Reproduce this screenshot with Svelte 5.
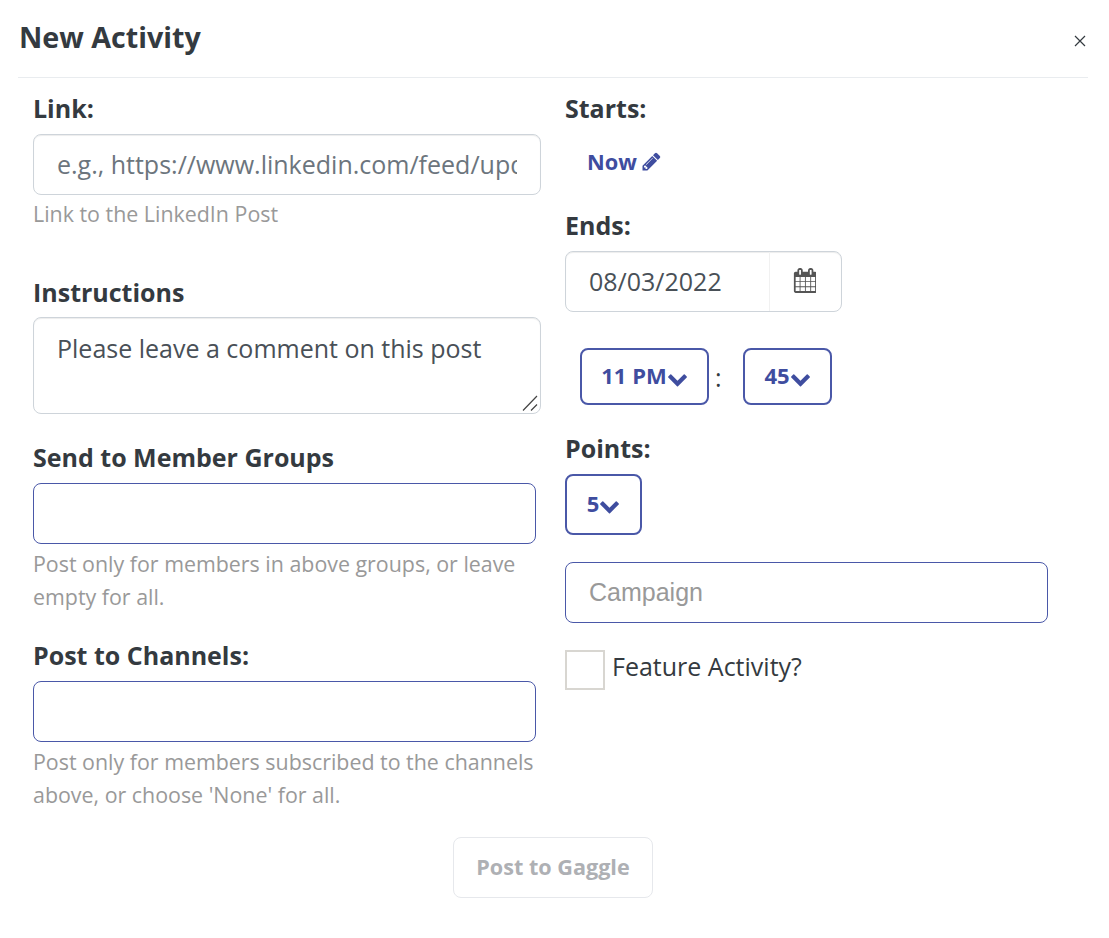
<script lang="ts">
  const pencil = 'M491 1536l91-91-235-235-91 91v107h128v128h107zm523-928q0-22-22-22-10 0-17 7l-542 542q-7 7-7 17 0 22 22 22 10 0 17-7l542-542q7-7 7-17zm-54-192l416 416-832 832h-416v-416zm683 96q0 53-37 90l-166 166-416-416 166-165q36-38 90-38 53 0 91 38l235 234q37 39 37 91z';
  const chevron = 'M1683 808l-742 741q-19 19-45 19t-45-19l-742-741q-19-19-19-45.5t19-45.5l166-165q19-19 45-19t45 19l531 531 531-531q19-19 45-19t45 19l166 165q19 19 19 45.5t-19 45.5z';
  const calendar = 'M192 1664h288v-288h-288v288zm352 0h320v-288h-320v288zm-352-352h288v-320h-288v320zm352 0h320v-320h-320v320zm-352-384h288v-288h-288v288zm736 736h320v-288h-320v288zm-384-736h320v-288h-320v288zm768 736h288v-288h-288v288zm-384-352h320v-320h-320v320zm-352-864v-288q0-13-9.5-22.5t-22.5-9.5h-64q-13 0-22.5 9.5t-9.5 22.5v288q0 13 9.5 22.5t22.5 9.5h64q13 0 22.5-9.5t9.5-22.5zm736 864h288v-320h-288v320zm-384-384h320v-288h-320v288zm384 0h288v-288h-288v288zm32-480v-288q0-13-9.5-22.5t-22.5-9.5h-64q-13 0-22.5 9.5t-9.5 22.5v288q0 13 9.5 22.5t22.5 9.5h64q13 0 22.5-9.5t9.5-22.5zm384-64v1280q0 52-38 90t-90 38h-1408q-52 0-90-38t-38-90v-1280q0-52 38-90t90-38h128v-96q0-66 47-113t113-47h64q66 0 113 47t47 113v96h384v-96q0-66 47-113t113-47h64q66 0 113 47t47 113v96h128q52 0 90 38t38 90z';
</script>

<div class="modal">
  <header class="modal-header">
    <h2>New Activity</h2>
    <button class="close" aria-label="Close">
      <svg viewBox="0 0 12 12" width="12" height="12"><path d="M1 1l10 10M11 1L1 11" stroke="#343a40" stroke-width="1.2" fill="none" /></svg>
    </button>
  </header>

  <div class="columns">
    <div class="col-left">
      <label class="field-label" for="link">Link:</label>
      <input id="link" class="text-input" placeholder="e.g., https://www.linkedin.com/feed/update/urn:li:activity" />
      <p class="help first">Link to the LinkedIn Post</p>

      <label class="field-label instructions" for="instructions">Instructions</label>
      <div class="area-wrap">
        <textarea id="instructions" class="text-input area">Please leave a comment on this post</textarea>
        <svg class="grip" viewBox="0 0 16 16" width="16" height="16"><path d="M1 15.5L15 1M9 15.5l6-6" stroke="#444" stroke-width="1.2" fill="none" /></svg>
      </div>

      <label class="field-label groups" for="groups">Send to Member Groups</label>
      <input id="groups" class="text-input picker" />
      <p class="help">Post only for members in above groups, or leave empty for all.</p>

      <label class="field-label channels" for="channels">Post to Channels:</label>
      <input id="channels" class="text-input picker" />
      <p class="help">Post only for members subscribed to the channels above, or choose 'None' for all.</p>
    </div>

    <div class="col-right">
      <div class="field-label">Starts:</div>
      <div class="now">
        Now
        <svg viewBox="0 0 1792 1792" width="21" height="21"><path d={pencil} /></svg>
      </div>

      <label class="field-label ends" for="ends">Ends:</label>
      <div class="date-group">
        <input id="ends" class="date-input" value="08/03/2022" />
        <span class="date-addon">
          <svg viewBox="0 0 1664 1792" width="23" height="25"><path d={calendar} /></svg>
        </span>
      </div>

      <div class="time-row">
        <button class="dropdown hour">11 PM<svg viewBox="0 0 1792 1792" width="21" height="21"><path d={chevron} /></svg></button>
        <span class="colon">:</span>
        <button class="dropdown minute">45<svg viewBox="0 0 1792 1792" width="21" height="21"><path d={chevron} /></svg></button>
      </div>

      <div class="field-label points">Points:</div>
      <button class="dropdown points-btn">5<svg viewBox="0 0 1792 1792" width="21" height="21"><path d={chevron} /></svg></button>

      <input class="campaign" placeholder="Campaign" />

      <label class="feature">
        <span class="box"></span>
        <span>Feature Activity?</span>
      </label>
    </div>
  </div>

  <div class="footer">
    <button class="submit" disabled>Post to Gaggle</button>
  </div>
</div>

<style>
  :global(body) {
    background: #fff;
  }

  .modal {
    width: 1109px;
    height: 938px;
    box-sizing: border-box;
    padding: 0 21px 0 18px;
    font-family: 'Open Sans', sans-serif;
    color: #343a40;
    overflow: hidden;
  }

  .modal-header {
    height: 77px;
    border-bottom: 1px solid #e9ecef;
    display: flex;
    justify-content: space-between;
    align-items: flex-start;
  }

  h2 {
    margin: 18px 0 0 1px;
    font-size: 28.7px;
    line-height: 38px;
    font-weight: 700;
  }

  .close {
    margin: 35px 2px 0 0;
    padding: 0;
    border: 0;
    background: none;
    display: flex;
  }

  .columns {
    display: grid;
    grid-template-columns: 508px 1fr;
    column-gap: 24px;
    padding: 14px 0 0 15px;
  }

  .col-left,
  .col-right {
    display: flex;
    flex-direction: column;
    align-items: flex-start;
  }

  .field-label {
    font-size: 25px;
    line-height: 32px;
    font-weight: 700;
    margin-bottom: 10px;
  }

  .text-input {
    display: block;
    width: 100%;
    height: 61px;
    box-sizing: border-box;
    padding: 0 23px 2px;
    border: 1px solid #ced4da;
    border-radius: 8px;
    background: #fff;
    box-shadow: inset 0 1px 1px rgba(0, 0, 0, 0.075);
    font-family: inherit;
    font-size: 25px;
    color: #495057;
    outline: none;
  }

  .text-input::placeholder {
    color: #6c757d;
    opacity: 1;
  }

  .area-wrap {
    position: relative;
    width: 100%;
  }

  .area {
    height: 97px;
    padding-top: 12px;
    line-height: 36px;
    resize: none;
  }

  .grip {
    position: absolute;
    right: 3px;
    bottom: 3px;
  }

  .picker {
    width: 503px;
    border-color: #4a58a8;
    box-shadow: none;
  }

  .help {
    margin: 3px 0 1px;
    font-size: 21.4px;
    line-height: 33px;
    color: #999;
  }

  .help.first {
    margin-top: 2px;
  }

  .instructions {
    margin-top: 45px;
    margin-bottom: 9px;
  }

  .groups {
    margin-top: 27px;
  }

  .channels {
    margin-top: 25px;
  }

  .now {
    display: flex;
    align-items: center;
    gap: 4px;
    margin: 9px 0 0 22px;
    height: 36px;
    font-size: 21.8px;
    font-weight: 700;
    color: #3f4d9f;
  }

  .now svg,
  .dropdown svg {
    fill: #3f4d9f;
  }

  .dropdown svg {
    margin-top: 6px;
  }

  .ends {
    margin-top: 30px;
    margin-bottom: 10px;
  }

  .date-group {
    display: flex;
    width: 277px;
    height: 61px;
    box-sizing: border-box;
    border: 1px solid #ced4da;
    border-radius: 8px;
    box-shadow: inset 0 1px 1px rgba(0, 0, 0, 0.075);
    overflow: hidden;
  }

  .date-input {
    width: 204px;
    box-sizing: border-box;
    padding: 0 23px 2px;
    border: 0;
    border-right: 1px solid #f1f1f1;
    background: transparent;
    font-family: inherit;
    font-size: 25px;
    color: #495057;
    outline: none;
  }

  .date-addon {
    flex: 1;
    display: flex;
    align-items: center;
    justify-content: center;
  }

  .date-addon svg {
    fill: #555;
    margin: -3px 2px 0 0;
  }

  .time-row {
    display: flex;
    align-items: center;
    margin: 36px 0 0 15px;
  }

  .dropdown {
    display: flex;
    align-items: center;
    justify-content: center;
    box-sizing: border-box;
    height: 57px;
    padding: 0 0 3px;
    border: 2px solid #4a58a8;
    border-radius: 8px;
    background: #fff;
    font-family: inherit;
    font-size: 22px;
    font-weight: 700;
    color: #3f4d9f;
  }

  .hour {
    width: 129px;
  }

  .minute {
    width: 89px;
  }

  .colon {
    width: 34px;
    padding-left: 6px;
    box-sizing: border-box;
    font-size: 25px;
    color: #343a40;
  }

  .points {
    margin-top: 27px;
  }

  .points-btn {
    width: 77px;
    height: 61px;
    padding-bottom: 4px;
  }

  .campaign {
    display: block;
    width: 483px;
    height: 61px;
    box-sizing: border-box;
    margin-top: 27px;
    padding: 0 23px;
    border: 1px solid #4a58a8;
    border-radius: 8px;
    font-family: 'Liberation Sans', Arial, sans-serif;
    font-size: 25px;
    outline: none;
  }

  .campaign::placeholder {
    color: #999;
    opacity: 1;
  }

  .feature {
    display: flex;
    align-items: flex-start;
    gap: 7px;
    margin-top: 27px;
    font-size: 25px;
    line-height: 32px;
    color: #343a40;
  }

  .box {
    width: 40px;
    height: 40px;
    box-sizing: border-box;
    border: 2px solid #d8d6d1;
    background: #fff;
  }

  .footer {
    display: flex;
    justify-content: center;
    margin-top: 25px;
  }

  .submit {
    width: 200px;
    height: 61px;
    padding: 0 0 3px;
    border: 1px solid #e6e8ec;
    border-radius: 8px;
    background: #fff;
    font-family: inherit;
    font-size: 21.6px;
    font-weight: 700;
    color: #aeb0b4;
  }
</style>
